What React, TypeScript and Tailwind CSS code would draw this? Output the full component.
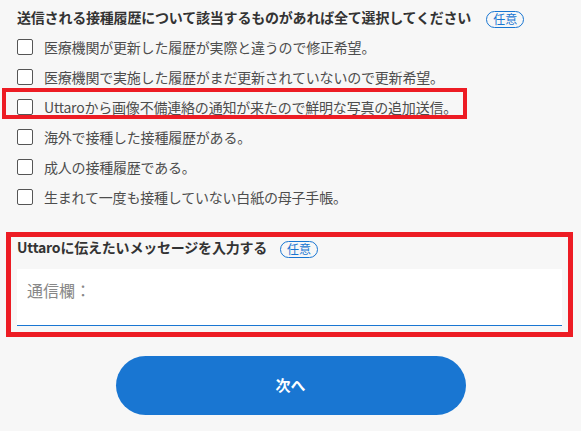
const OPTIONS = [
  "医療機関が更新した履歴が実際と違うので修正希望。",
  "医療機関で実施した履歴がまだ更新されていないので更新希望。",
  "Uttaroから画像不備連絡の通知が来たので鮮明な写真の追加送信。",
  "海外で接種した接種履歴がある。",
  "成人の接種履歴である。",
  "生まれて一度も接種していない白紙の母子手帳。",
];

function OptionalBadge() {
  return (
    <span className="inline-flex h-[17px] items-center rounded-full border border-[#1976d2] px-[6px] text-[12px] leading-none text-[#1976d2]">
      任意
    </span>
  );
}

export default function App() {
  return (
    <div className="min-h-screen bg-[#f7f7f7] font-['Noto_Sans_CJK_JP','Noto_Sans',sans-serif] text-[#333]">
      <div className="px-[17px] pt-[7px]">
        <div className="flex h-[20px] items-center">
          <h2 className="text-[14px] font-bold leading-[20px] tracking-[-0.2px] text-[#333]">
            送信される接種履歴について該当するものがあれば全て選択してください
          </h2>
          <span className="ml-[15px]">
            <OptionalBadge />
          </span>
        </div>

        <ul className="mt-[5px]">
          {OPTIONS.map((label, i) => (
            <li key={label} className="relative flex h-[30px] items-center gap-[11px]">
              <input
                type="checkbox"
                className="h-[16px] w-[16px] shrink-0 appearance-none rounded-[2px] border-[1.5px] border-[#555] bg-white"
              />
              <span className="text-[14px] leading-[20px] tracking-[-0.2px] text-[#4d4d4d]">{label}</span>
              {i === 2 && (
                <div className="pointer-events-none absolute left-[-15px] top-[-4px] h-[31px] w-[465px] border-[4px] border-[#ed1c24]" />
              )}
            </li>
          ))}
        </ul>

        <div className="relative mr-[2px] mt-[25px]">
          <div className="flex h-[20px] items-center">
            <span className="text-[14px] font-bold leading-[20px] tracking-[-0.2px] text-[#333]">
              Uttaroに伝えたいメッセージを入力する
            </span>
            <span className="ml-[13px]">
              <OptionalBadge />
            </span>
          </div>
          <textarea
            placeholder="通信欄："
            className="mt-[12px] block h-[57px] w-full resize-none border-b border-[#1976d2] bg-white px-[10px] pt-[9px] text-[16px] leading-[24px] text-[#333] outline-none placeholder:text-[#888]"
          />
          <div className="pointer-events-none absolute bottom-[-11px] left-[-11px] right-[-11px] top-[-5px] border-[5px] border-[#ed1c24]" />
        </div>

        <div className="mt-[30px] flex justify-center">
          <button
            type="button"
            className="h-[59px] w-[350px] rounded-full bg-[#1976d2] text-[15px] font-bold text-white"
          >
            次へ
          </button>
        </div>
      </div>
    </div>
  );
}
